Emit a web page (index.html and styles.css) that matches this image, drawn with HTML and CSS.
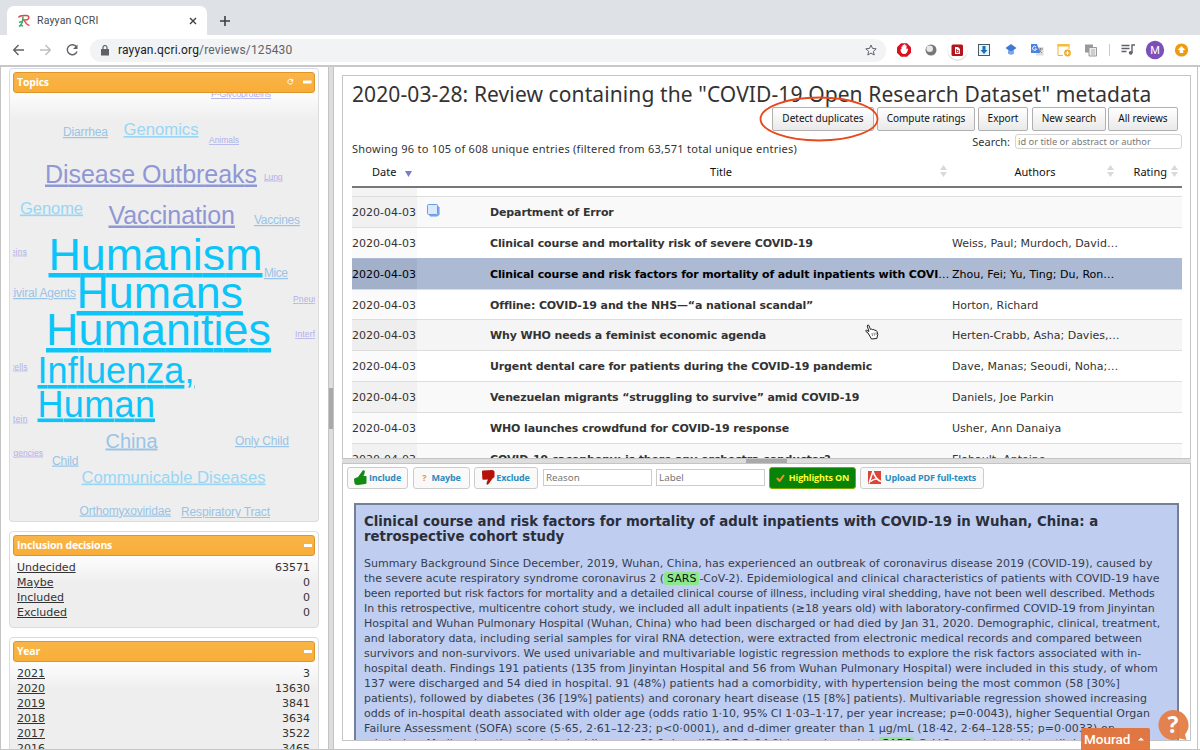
FILE: index.html
```
<!DOCTYPE html>
<html lang="en">
<head>
    <meta charset="UTF-8">
    <title>Rayyan QCRI</title>
    <link rel="stylesheet" href="styles.css">
</head>
<body>
    <div class="tabstrip">
        <div class="tab">
            <svg class="favicon" width="14" height="14" viewBox="0 0 14 14" fill="none" stroke-width="1.500">
                <path d="M1.500 3.500C2.500 1 6 1.500 9.500 1.500c3.500 0 3 4.500-1 4.500H6" stroke="#e04848"/>
                <path d="M6 2.500C6 7 5 11 2 12.500" stroke="#3aa76d"/>
                <path d="M7 6.500C9 8 9 11 12.500 11.500" stroke="#d9534f"/>
                <path d="M2 8.500l3-1M3.500 11l2.500 1" stroke="#3aa76d"/>
            </svg>
            <span class="tab-title">Rayyan QCRI</span>
            <svg width="8" height="8" viewBox="0 0 8 8" stroke="#3c4043" stroke-width="1.400"><path d="M1 1l6 6M7 1L1 7"/></svg>
        </div>
        <svg class="newtab" width="12" height="12" viewBox="0 0 12 12" stroke="#3c4043" stroke-width="1.600"><path d="M6 1v10M1 6h10"/></svg>
    </div>
    <div class="toolbar">
        <svg class="nav" width="76" height="16" viewBox="0 0 76 16" fill="none" stroke="#5f6368" stroke-width="1.400">
            <path d="M12 8H2M6.500 3L1.700 8l4.800 5"/>
            <path d="M28 8h10M33.500 3l4.800 5-4.800 5" stroke="#bcbec1"/>
            <path d="M64.500 5A5 5 0 1 0 65 9.500"/>
            <path d="M65.500 2.500v4.500H61z" fill="#5f6368" stroke="none"/>
        </svg>
        <div class="urlbar">
            <svg width="8" height="11" viewBox="0 0 8 11"><path d="M0 4h8v6.500H0z" fill="#5f6368"/><path d="M2 4V2.500a2 2 0 0 1 4 0V4" fill="none" stroke="#5f6368" stroke-width="1.200"/></svg>
            <span class="url"><b>rayyan.qcri.org</b>/reviews/125430</span>
            <svg width="12" height="12" viewBox="0 0 12 12" fill="none" stroke="#5f6368"><path d="M6 1l1.500 3.400 3.700.4-2.800 2.500.8 3.700L6 9.100 2.800 11l.8-3.700L.8 4.800l3.700-.4z"/></svg>
        </div>
        <svg class="extensions" width="300" height="26" viewBox="890 0 300 26">
            <path d="M901 6.200h6l4 4v5.600l-4 4h-6l-4-4v-5.600z" fill="#d9121f"/>
            <path d="M900.500 12.500l1-.5V9.500q.7-.7 1.200 0V8q.7-.7 1.300 0v-.5q.7-.7 1.300 0V8.500q.7-.7 1.200 0V12.500l1-1q.8 0 .6.800L907 15.500l-1.700 1.500h-2.300l-2-1.800z" fill="#fff"/>
            <circle cx="931" cy="13" r="5.500" fill="#777"/><circle cx="929.700" cy="11.700" r="3.300" fill="#e8e8e8"/>
            <circle cx="957.500" cy="14" r="10" fill="#ddd"/><circle cx="957.500" cy="13" r="9.700" fill="#fff"/>
            <rect x="951.500" y="7.500" width="11.500" height="11.500" rx="1.500" fill="#b3151d"/>
            <path d="M955 10h3l2 2v5h-5z" fill="#fff"/><path d="M956.500 12v3.500h2.200V13.500h-2" stroke="#b3151d" fill="none" stroke-width=".8"/>
            <rect x="978.500" y="7.500" width="11" height="11" fill="#eaf4fb" stroke="#4a5a66"/>
            <path d="M982.500 9h3v4h2l-3.500 4-3.500-4h2z" fill="#1470b8"/>
            <path d="M1011 7l5.500 4-5.500 4-5.500-4z" fill="#3f79d8"/><path d="M1008 13v3.500q3 2.500 6 0V13l-3 2z" fill="#7aa6ee"/>
            <rect x="1036" y="10" width="7.500" height="8.500" fill="#ddd"/><path d="M1031 7h6l3 9h-9z" fill="#4a83e6"/>
            <path d="M1036 9.900a2 2 0 1 0 .5 2h-1.700" fill="none" stroke="#fff"/><path d="M1038 12h5M1040.500 11v1q0 2-2 4M1039 13l3 3" stroke="#777" fill="none" stroke-width=".8"/>
            <path d="M1058.500 8.500h10.500v3.500M1058 18.500h5M1058 7v11.500" stroke="#f3b435" fill="none"/><path d="M1057.500 7h12v2.500h-12z" fill="#f6bd3d"/>
            <circle cx="1067.500" cy="16" r="3.400" fill="#f1a92c"/><path d="M1067.500 14v4M1065.500 16h4" stroke="#fff"/>
            <path d="M1085 7.500h8v8h-8z" fill="#999"/><path d="M1089 10.500h7.500v8.500H1089z" fill="#eee" stroke="#999"/><path d="M1091 13h4M1091 15h4M1091 17h4" stroke="#999" stroke-width=".8"/>
            <path d="M1109.500 7v12" stroke="#ccc"/>
            <path d="M1121.500 8.500h8M1121.500 11.500h8M1121.500 14.500h5M1132 16V8h3" stroke="#5f6368" stroke-width="1.400" fill="none"/><circle cx="1130.700" cy="15.800" r="1.900" fill="#5f6368"/>
            <circle cx="1155" cy="13" r="9.200" fill="#7c50b8"/><text class="avatar" x="1155" y="16.700">M</text>
            <circle cx="1181.500" cy="13" r="6.600" fill="#ee9b10"/><path d="M1181.500 9l3.800 4h-2v3h-3.600v-3h-2z" fill="#fff"/>
        </svg>
    </div>

    <div class="page">
        <div class="sidebar">
            <div class="facet facet-topics">
                <div class="facet-header"><span>Topics</span>
                    <svg width="26" height="10" viewBox="0 0 26 10"><path d="M6 2.800A2.500 2.500 0 1 0 6.700 5.500" fill="none" stroke="#fff"/><path d="M7.200 1.500v3H4.200z" fill="#fff"/><path d="M17 3.500h8.500v3H17z" fill="#fff"/></svg>
                </div>
                <svg class="cloud" width="302" height="425" viewBox="13 93 302 425">
                    <g class="faint">
                        <text x="211" y="97" font-size="9" textLength="60">P-Glycoproteins</text>
                        <text x="209" y="143" font-size="8.500" textLength="30">Animals</text>
                        <text x="264" y="179.500" font-size="8.500" textLength="18.500">Lung</text>
                        <text x="-6" y="254.500" font-size="8.500" textLength="33">Proteins</text>
                        <text x="293" y="302" font-size="8.500" textLength="44">Pneumonia</text>
                        <text x="295" y="337" font-size="8.500" textLength="42">Interferons</text>
                        <text x="2" y="369.500" font-size="8.500" textLength="25.500">T-cells</text>
                        <text x="-1" y="421.500" font-size="8.500" textLength="28.500">Protein</text>
                        <text x="-7" y="455.500" font-size="8.500" textLength="50">Emergencies</text>
                    </g>
                    <g class="violet">
                        <text x="45" y="182.500" font-size="25" textLength="212">Disease Outbreaks</text>
                        <text x="108.500" y="223.500" font-size="25" textLength="126.500">Vaccination</text>
                    </g>
                    <g class="sky">
                        <text x="123.500" y="135" font-size="16.700" textLength="75">Genomics</text>
                        <text x="20" y="213.500" font-size="16.500" textLength="63">Genome</text>
                        <text x="81.500" y="482.500" font-size="16.700" textLength="184">Communicable Diseases</text>
                    </g>
                    <g class="steel">
                        <text x="63" y="136" font-size="12" textLength="45">Diarrhea</text>
                        <text x="254" y="224" font-size="12" textLength="46">Vaccines</text>
                        <text x="264" y="277" font-size="12" textLength="24">Mice</text>
                        <text x="-4" y="297" font-size="12" textLength="80">Antiviral Agents</text>
                        <text x="105.500" y="447.500" font-size="20" textLength="52">China</text>
                        <text x="235" y="445" font-size="12" textLength="54">Only Child</text>
                        <text x="52" y="464.500" font-size="12" textLength="26.500">Child</text>
                        <text x="79.500" y="514.500" font-size="12" textLength="91.500">Orthomyxoviridae</text>
                        <text x="181" y="516" font-size="12" textLength="89">Respiratory Tract</text>
                    </g>
                    <g class="bright">
                        <text x="48.500" y="270" font-size="44.800" textLength="214">Humanism</text>
                        <text x="76.500" y="308" font-size="44.800" textLength="166.500">Humans</text>
                        <text x="46" y="345" font-size="44.800" textLength="225">Humanities</text>
                        <text x="37.500" y="383" font-size="36" textLength="157">Influenza,</text>
                        <text x="37.500" y="416.500" font-size="36" textLength="117.500">Human</text>
                    </g>
                </svg>
            </div>
            <div class="facet facet-inclusion">
                <div class="facet-header"><span>Inclusion decisions</span><i class="minus"></i></div>
                <ul>
                    <li><a>Undecided</a><span>63571</span></li>
                    <li><a>Maybe</a><span>0</span></li>
                    <li><a>Included</a><span>0</span></li>
                    <li><a>Excluded</a><span>0</span></li>
                </ul>
            </div>
            <div class="facet facet-year">
                <div class="facet-header"><span>Year</span><i class="minus"></i></div>
                <ul>
                    <li><a>2021</a><span>3</span></li>
                    <li><a>2020</a><span>13630</span></li>
                    <li><a>2019</a><span>3841</span></li>
                    <li><a>2018</a><span>3634</span></li>
                    <li><a>2017</a><span>3522</span></li>
                    <li><a>2016</a><span>3465</span></li>
                </ul>
            </div>
        </div>
        <div class="resizer-v"><div class="toggler-v"></div></div>
        <div class="main">
            <div class="results">
                <h1>2020-03-28: Review containing the "COVID-19 Open Research Dataset" metadata</h1>
                <div class="actions">
                    <button class="b-detect">Detect duplicates<svg class="marker" width="120" height="46" viewBox="0 0 120 46"><ellipse cx="60" cy="23" rx="58.500" ry="21.500" fill="none" stroke="#e8481c" stroke-width="1.800"/></svg></button>
                    <button class="b-compute">Compute ratings</button>
                    <button class="b-export">Export</button>
                    <button class="b-search">New search</button>
                    <button class="b-all">All reviews</button>
                </div>
                <div class="info">
                    <span class="showing">Showing 96 to 105 of 608 unique entries (filtered from 63,571 total unique entries)</span>
                    <label>Search:<input type="text" placeholder="id or title or abstract or author"></label>
                </div>
                <div class="thead">
                    <span class="th-date">Date<svg width="7" height="6" viewBox="0 0 7 6"><path d="M0 0h7L3.500 6z" fill="#7a7ad0"/></svg></span>
                    <span class="th-title">Title</span>
                    <svg class="sort" width="7" height="12" viewBox="0 0 7 12"><path d="M3.500 0L7 5H0zM0 7h7l-3.500 5z" fill="#d9d9d9"/></svg>
                    <span class="th-authors">Authors</span>
                    <svg class="sort" width="7" height="12" viewBox="0 0 7 12"><path d="M3.500 0L7 5H0zM0 7h7l-3.500 5z" fill="#d9d9d9"/></svg>
                    <span class="th-rating">Rating</span>
                    <svg class="sort" width="7" height="12" viewBox="0 0 7 12"><path d="M3.500 0L7 5H0zM0 7h7l-3.500 5z" fill="#d9d9d9"/></svg>
                </div>
                <div class="tbody">
                    <div class="row odd"><span class="date">2020-04-03</span><span class="mark"><svg width="13" height="13" viewBox="0 0 13 13"><path d="M2 3h10v7.500L10.500 12H3z" fill="#8db4ea" stroke="#6b97dc"/><rect x=".5" y=".5" width="10" height="10" rx="1" fill="#dbe9fc" stroke="#6b9ce0"/></svg></span><b>Department of Error</b><span class="authors"></span></div>
                    <div class="row"><span class="date">2020-04-03</span><span class="mark"></span><b>Clinical course and mortality risk of severe COVID-19</b><span class="authors">Weiss, Paul; Murdoch, David…</span></div>
                    <div class="row selected"><span class="date">2020-04-03</span><span class="mark"></span><b>Clinical course and risk factors for mortality of adult inpatients with COVI<span class="dots">…</span></b><span class="authors">Zhou, Fei; Yu, Ting; Du, Ron…</span></div>
                    <div class="row"><span class="date">2020-04-03</span><span class="mark"></span><b>Offline: COVID-19 and the NHS—“a national scandal”</b><span class="authors">Horton, Richard</span></div>
                    <div class="row hover"><span class="date">2020-04-03</span><span class="mark"></span><b>Why WHO needs a feminist economic agenda</b><span class="authors">Herten-Crabb, Asha; Davies,…</span></div>
                    <div class="row"><span class="date">2020-04-03</span><span class="mark"></span><b>Urgent dental care for patients during the COVID-19 pandemic</b><span class="authors">Dave, Manas; Seoudi, Noha;…</span></div>
                    <div class="row odd"><span class="date">2020-04-03</span><span class="mark"></span><b>Venezuelan migrants “struggling to survive” amid COVID-19</b><span class="authors">Daniels, Joe Parkin</span></div>
                    <div class="row"><span class="date">2020-04-03</span><span class="mark"></span><b>WHO launches crowdfund for COVID-19 response</b><span class="authors">Usher, Ann Danaiya</span></div>
                    <div class="row odd"><span class="date">2020-04-03</span><span class="mark"></span><b>COVID-19 cacophony: is there any orchestra conductor?</b><span class="authors">Flahault, Antoine</span></div>
                </div>
            </div>
            <div class="resizer-h"><div class="toggler-h"></div></div>
            <div class="detail">
                <div class="decisions">
                    <button class="d-include"><svg width="13" height="15" viewBox="0 0 13 15"><path d="M0 9.500Q0 8 1.500 8L4 7 8 1.500Q9-.5 10.500.5 11.500 2 9.500 6H11.500Q13 6 12.500 7.500V13Q12.500 14 11 14L4 15Q1 15 .5 13.500z" fill="#148a14"/></svg>Include</button>
                    <button class="d-maybe"><i>?</i>Maybe</button>
                    <button class="d-exclude"><svg width="13" height="15" viewBox="0 0 13 15"><path d="M0 1.500Q0 .5 1 .5L10 0Q12 0 12.500 1.500V6.500Q12.500 7.500 10.500 8.500L7 13.500Q5.500 15.500 4.500 14 4.500 12 6 9.500L1.500 9.800Q.3 9.800.3 8.500z" fill="#b41208"/></svg>Exclude</button>
                    <input type="text" placeholder="Reason">
                    <input type="text" class="label-input" placeholder="Label">
                    <button class="d-highlights"><svg width="9" height="8" viewBox="0 0 9 8"><path d="M1 4l2.500 3L8 1" fill="none" stroke="#e8952e" stroke-width="2"/></svg>Highlights ON</button>
                    <button class="d-upload"><svg width="13" height="13" viewBox="0 0 13 13"><path d="M0 0h13v13H0z" fill="#dc4437"/><path d="M1 12.500L5 0M5 0Q7 8 13 10.500M2.500 10.500Q6 7.500 10 8" fill="none" stroke="#fff" stroke-width="1.600"/></svg>Upload PDF full-texts</button>
                </div>
                <div class="article">
                    <h2>Clinical course and risk factors for mortality of adult inpatients with COVID-19 in Wuhan, China: a<br>retrospective cohort study</h2>
                    <p>
                        Summary Background Since December, 2019, Wuhan, China, has experienced an outbreak of coronavirus disease 2019 (COVID-19), caused by<br>
                        the severe acute respiratory syndrome coronavirus 2 (<mark>SARS</mark>-CoV-2). Epidemiological and clinical characteristics of patients with COVID-19 have<br>
                        <span class="tighter">been reported but risk factors for mortality and a detailed clinical course of illness, including viral shedding, have not been well described. Methods</span><br>
                        <span class="tight">In this retrospective, multicentre cohort study, we included all adult inpatients (≥18 years old) with laboratory-confirmed COVID-19 from Jinyintan</span><br>
                        <span class="snug">Hospital and Wuhan Pulmonary Hospital (Wuhan, China) who had been discharged or had died by Jan 31, 2020. Demographic, clinical, treatment,</span><br>
                        and laboratory data, including serial samples for viral RNA detection, were extracted from electronic medical records and compared between<br>
                        survivors and non-survivors. We used univariable and multivariable logistic regression methods to explore the risk factors associated with in-<br>
                        hospital death. Findings 191 patients (135 from Jinyintan Hospital and 56 from Wuhan Pulmonary Hospital) were included in this study, of whom<br>
                        137 were discharged and 54 died in hospital. 91 (48%) patients had a comorbidity, with hypertension being the most common (58 [30%]<br>
                        patients), followed by diabetes (36 [19%] patients) and coronary heart disease (15 [8%] patients). Multivariable regression showed increasing<br>
                        odds of in-hospital death associated with older age (odds ratio 1·10, 95% CI 1·03–1·17, per year increase; p=0·0043), higher Sequential Organ<br>
                        <span class="loose">Failure Assessment (SOFA) score (5·65, 2·61–12·23; p&lt;0·0001), and d-dimer greater than 1 μg/mL (18·42, 2·64–128·55; p=0·0033) on</span><br>
                        admission. Median duration of viral shedding was 20·0 days (IQR 17·0–24·0) in survivors, but <mark>SARS</mark>-CoV-2 was detectable until death in
                    </p>
                </div>
            </div>
        </div>
    </div>

    <svg class="cursor" width="14" height="16" viewBox="0 0 14 16"><path d="M3 9L1 7.500Q0 6.500 1.500 6.200L4 7.500 2.200 2Q2.500.5 3.800 1.300L5.500 5.500Q7 4.500 7.700 5.700 9 5 9.800 6.300 11.500 6 12 7.500L12.800 10.500 11.800 14.500 6.500 15z" fill="#fff" stroke="#222"/><path d="M7 9l.5 3M9 8.500l.5 3M11 8.500l.2 2.500" stroke="#555" stroke-width=".7"/></svg>
    <div class="user-menu">Mourad<svg width="6" height="4" viewBox="0 0 6 4"><path d="M0 3.500l3-3 3 3z" fill="#fff"/></svg></div>
    <div class="help">
        <svg width="32" height="32" viewBox="0 0 32 32"><path d="M16 1a15 15 0 1 0 6 28.500l6.500 1.500-1.500-5.500A15 15 0 0 0 16 1z" fill="#e57d45" fill-opacity=".95"/></svg>
        <span>?</span>
    </div>
</body>
</html>
```
FILE: styles.css
```
* { box-sizing: border-box; }
body { margin: 0; width: 1200px; height: 750px; overflow: hidden; background: #fff; color: #333; font-family: "DejaVu Sans", Verdana, sans-serif; font-size: 11px; display: flex; flex-direction: column; position: relative; }
svg { display: block; flex: none; }
button, input { font-family: inherit; margin: 0; }
h1, h2, p, ul { margin: 0; padding: 0; font-weight: normal; }

/* browser chrome */
.tabstrip { height: 35px; flex: none; background: #dee1e6; display: flex; align-items: flex-end; padding-left: 7px; }
.tab { width: 200px; height: 29px; background: #fff; border-radius: 7px 7px 0 0; display: flex; align-items: center; padding: 0 10px 0 10px; font-family: Roboto, sans-serif; color: #45494d; }
.tab-title { flex: 1; margin-left: 6px; font-size: 10.5px; letter-spacing: .18px; }
.newtab { margin: 0 0 8px 12px; }
.toolbar { height: 30px; flex: none; display: flex; align-items: center; padding-left: 12px; }
.urlbar { width: 796px; height: 23px; border-radius: 12px; background: #f1f3f4; margin-left: 2px; padding: 0 9px 0 11px; display: flex; align-items: center; }
.url { flex: 1; margin-left: 9px; font: 12px Roboto, sans-serif; letter-spacing: .16px; color: #5f6368; }
.url b { font-weight: normal; color: #202124; }
.extensions { margin-left: 4px; }
.avatar { font: 11px Roboto, sans-serif; fill: #fff; text-anchor: middle; }

.page { flex: 1; min-height: 0; display: flex; border: 1px solid #c4c4c4; border-top: 2px solid #c8c8c8; border-right: 0; }

/* facets */
.sidebar { width: 327px; overflow: hidden; padding: 1px 9px 0 8px; }
.facet { border: 1px solid #dcdcdc; border-radius: 4px; padding: 3px; background: linear-gradient(#fff 0, #fff 20px, #eee 52px); margin-bottom: 9px; }
.facet-topics { height: 454px; border-color: #d5dbe8 #dcdcdc #dcdcdc; }
.facet-inclusion { height: 97px; }
.facet-year { height: 130px; }
.facet-header { height: 21px; border: 1px solid #e0942a; border-radius: 3px; background: linear-gradient(#f9b548, #f8ad38); color: #fff; font: bold 10.500px "Open Sans", sans-serif; letter-spacing: -.2px; display: flex; align-items: center; justify-content: space-between; padding: 0 2px 1px 3px; }
.minus { width: 8px; height: 3px; background: #fff; }
.cloud { font-family: "Liberation Sans", Arial, sans-serif; overflow: hidden; }
.cloud text { text-decoration: underline; }
.faint { fill: #b0b0ea; }
.violet { fill: #8f97d4; }
.sky { fill: #98d6f4; }
.steel { fill: #99c4e6; }
.bright { fill: #0cc4f8; }
.facet ul { list-style: none; padding: 4px 5px 0 4px; }
.facet li { display: flex; justify-content: space-between; height: 15px; line-height: 15px; }
.facet a { text-decoration: underline; }

/* split pane bars */
.resizer-v { width: 6px; flex: none; background: #ddd; border: solid #c4c4c4; border-width: 0 1px; display: flex; align-items: center; }
.toggler-v { width: 4px; height: 41px; background: #a9a9a9; }
.resizer-h { height: 4px; flex: none; background: #ddd; display: flex; justify-content: center; }
.toggler-h { width: 41px; background: #a9a9a9; }

.main { flex: 1; display: flex; flex-direction: column; padding: 8px 6px 8px 8px; border-right: 1px solid #c4c4c4; margin-right: 2px; min-width: 0; }
.results { height: 384px; flex: none; border: 1px solid #c4c4c4; padding: 4px 8px 0 9px; overflow: hidden; white-space: nowrap; }
h1 { font: 21px/28px "Noto Sans", sans-serif; letter-spacing: .1px; color: #333; }
.actions { display: flex; margin-top: -1px; padding-left: 420px; }
.actions button { height: 24px; padding: 0 0 2px; border: 1px solid #b0b0b0; border-radius: 2px; background: linear-gradient(#fff, #e9e9e9); font: 10px "Noto Sans", sans-serif; color: #111; position: relative; }
.b-detect { width: 102px; margin-right: 3px; }
.b-compute { width: 98px; margin-right: 3px; }
.b-export { width: 50px; margin-right: 4px; }
.b-search { width: 74px; margin-right: 2px; }
.b-all { width: 70px; }
.marker { position: absolute; left: -14px; top: -12px; z-index: 2; }
.info { display: flex; justify-content: space-between; height: 25px; padding-top: 3px; }
.showing { font: 11px/15px "Noto Sans", sans-serif; letter-spacing: .26px; padding-top: 7px; }
.info label { display: flex; font: 11px/16px "Noto Sans", sans-serif; }
.info input { width: 167px; height: 15px; margin-left: 5px; border: 1px solid #d4d4d4; border-radius: 3px; padding: 0 2px; font: 9.300px "Noto Sans", sans-serif; }
input::placeholder { color: #777; opacity: 1; }
.thead { height: 32px; border-bottom: 2px solid #777; display: flex; align-items: center; font: 11px "Noto Sans", sans-serif; color: #111; }
.th-date { width: 138px; padding-left: 20px; display: flex; align-items: center; gap: 9px; }
.th-date svg { margin-top: 6px; }
.th-title { width: 450px; text-align: center; padding-left: 12px; }
.th-authors { width: 160px; text-align: center; padding-left: 16px; }
.th-rating { width: 57px; text-align: right; padding-right: 4px; }
.tbody { padding-top: 8px; background: linear-gradient(90deg, #f4f4f4 65px, #fff 65px); }
.row { height: 30.850px; border-top: 1px solid #ddd; display: flex; line-height: 31px; background: #fff; }
.date { width: 65px; background: #fafafa; }
.mark { width: 73px; padding: 7px 10px; }
.row b { width: 462px; letter-spacing: -.12px; }
.row .dots { font-weight: normal; letter-spacing: -3px; }
.odd { background: #f9f9f9; }
.odd .date { background: #f1f1f1; }
.hover { background: #f5f5f5; }
.hover .date { background: #eee; }
.selected { background: #acbad4; color: #000; border-color: #acbad4; }
.selected .date { background: #a3b0ca; }

/* article pane */
.detail { flex: 1; min-height: 0; border: 1px solid #c4c4c4; padding: 3px 11px 0 4px; overflow: hidden; white-space: nowrap; }
.decisions { display: flex; align-items: center; height: 22px; }
.decisions button { height: 22px; padding: 0 0 1px; border: 1px solid #ccc; border-radius: 3px; background: #f9f9f9; color: #2a8cc0; font: bold 9px "Open Sans", sans-serif; letter-spacing: -.15px; display: flex; align-items: center; justify-content: center; gap: 4px; }
.decisions input { width: 109px; height: 17px; border: 1px solid #ccc; padding: 0 2px; font: 9.800px "Noto Sans", sans-serif; margin: -2px 4px 0 0; }
.decisions .label-input { margin-right: 4px; }
.decisions .d-include { width: 61px; margin-right: 5px; gap: 2px; }
.decisions .d-maybe { width: 57px; margin-right: 4px; gap: 5px; }
.d-maybe i { font-style: normal; color: #e9962d; }
.decisions .d-exclude { width: 64px; margin-right: 5px; gap: 1px; }
.decisions .d-highlights { width: 87px; margin-right: 4px; background: #078307; border-color: #7aa800; color: #ff3; }
.decisions .d-upload { width: 124px; }
.article { margin: 14px 0 0 7px; height: 300px; background: #bfcdf0; border: 2px solid #747f98; padding: 9px 8px; }
h2 { font-weight: bold; font-size: 13.300px; line-height: 15px; color: #2a2f3a; }
.article p { margin-top: 12px; line-height: 15px; color: #363d4d; letter-spacing: -.01px; }
.tighter { letter-spacing: -.16px; }
.tight { letter-spacing: -.1px; }
.snug { letter-spacing: -.05px; }
.loose { letter-spacing: .09px; }
mark { background: #8ce88c; color: #111; border-radius: 2px; padding: 0 3px; }

.cursor { position: absolute; left: 865px; top: 324px; }
.user-menu { position: absolute; left: 1081px; top: 728px; width: 69px; height: 22px; background: #e2743c; opacity: .96; border-radius: 2px 2px 0 0; color: #fff; font: 500 13.500px/21px Roboto, sans-serif; display: flex; align-items: center; padding-left: 3px; gap: 8px; }
.help { position: absolute; left: 1158px; top: 709px; }
.help span { position: absolute; left: 0; top: 0; width: 30px; text-align: center; color: #fff; font: bold 23px/30px "Open Sans", sans-serif; }
```
